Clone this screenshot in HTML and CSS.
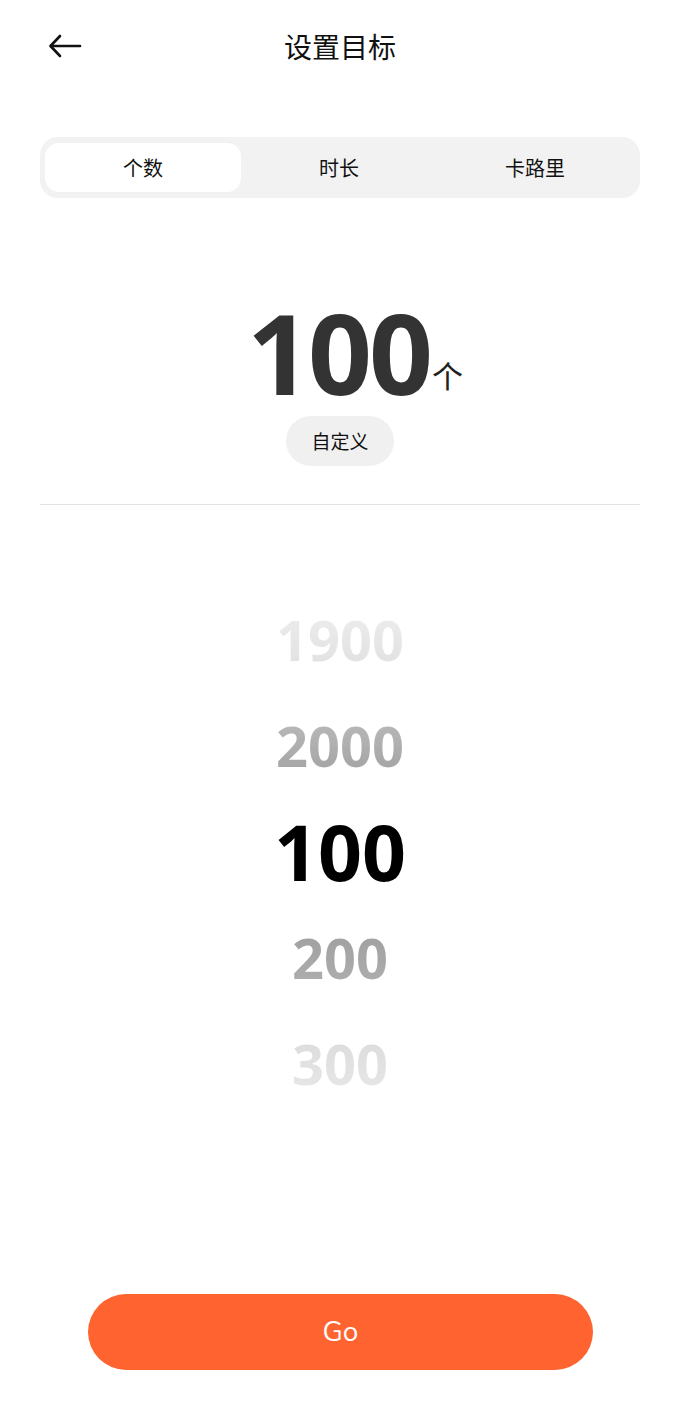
FILE: index.html
```html
<!DOCTYPE html>
<html lang="zh-CN">
<head>
    <meta charset="utf-8"/>
    <meta content="width=device-width, initial-scale=1" name="viewport"/>
    <title>设置目标</title>
    <link rel="stylesheet" href="styles.css">
</head>
<body>
    <div class="page">
        <header class="topbar">
            <a class="back" href="#" aria-label="返回">
                <svg width="34" height="24" viewBox="0 0 34 24" fill="none" stroke="#111" stroke-width="2.6" stroke-linecap="round" stroke-linejoin="round">
                    <path d="M32 12H3"/>
                    <path d="M12 2L2.5 12L12 22"/>
                </svg>
            </a>
            <h1 class="title">设置目标</h1>
            <span></span>
        </header>

        <div class="tabs">
            <div class="tab active">个数</div>
            <div class="tab">时长</div>
            <div class="tab">卡路里</div>
        </div>

        <div class="value">
            <div class="value-row">
                <span class="value-num">100</span>
                <span class="value-unit">个</span>
            </div>
            <button class="custom">自定义</button>
        </div>

        <hr class="divider">

        <div class="picker">
            <div class="pick far top">1900</div>
            <div class="pick near top">2000</div>
            <div class="pick current">100</div>
            <div class="pick near bottom">200</div>
            <div class="pick far bottom">300</div>
        </div>

        <button class="go">Go</button>
    </div>
</body>
</html>
```

FILE: styles.css
```css
body {
    margin: 0;
    padding: 0;
    background-color: #fff;
    color: #111;
    font-family: "Noto Sans", "Noto Sans CJK SC", sans-serif;
}
.page {
    min-height: 100vh;
    display: flex;
    flex-direction: column;
    padding: 0 40px;
    box-sizing: border-box;
}
.topbar {
    height: 92px;
    display: grid;
    grid-template-columns: 1fr auto 1fr;
    align-items: center;
}
.back {
    display: flex;
    align-items: center;
    padding-left: 8px;
}
.title {
    margin: 0;
    font-size: 28px;
    font-weight: 400;
    color: #111;
}

.tabs {
    margin-top: 45px;
    background-color: #f2f2f2;
    border-radius: 18px;
    padding: 6px 7px 6px 5px;
    display: grid;
    grid-template-columns: repeat(3, 1fr);
}
.tab {
    height: 49px;
    display: flex;
    align-items: center;
    justify-content: center;
    font-size: 20px;
    color: #111;
    border-radius: 14px;
}
.tab.active {
    background-color: #fff;
}

.value {
    margin-top: 96px;
    display: flex;
    flex-direction: column;
    align-items: center;
}
.value-row {
    display: flex;
    align-items: flex-end;
    margin-left: 30px;
}
.value-num {
    font-size: 112px;
    font-weight: 700;
    line-height: 116px;
    color: #333;
    letter-spacing: -3px;
}
.value-unit {
    font-size: 31px;
    line-height: 31px;
    color: #222;
    margin: 0 0 18px 2px;
}
.custom {
    margin-top: 6px;
    height: 50px;
    padding: 0 25px;
    border: none;
    border-radius: 25px;
    background-color: #f0f0f0;
    font-family: inherit;
    font-size: 19px;
    color: #111;
}

.divider {
    margin: 38px 0 0;
    border: none;
    border-top: 1px solid #e2e2e2;
}

.picker {
    margin-top: 81px;
    display: flex;
    flex-direction: column;
    align-items: center;
}
.pick {
    height: 106px;
    display: flex;
    align-items: center;
    justify-content: center;
    font-size: 56px;
    font-weight: 700;
    -webkit-background-clip: text;
    background-clip: text;
    color: transparent;
}
.pick.far.top {
    background-image: linear-gradient(#f2f2f2, #dcdcdc);
}
.pick.near.top {
    background-image: linear-gradient(#c4c4c4, #9a9a9a);
}
.pick.current {
    font-size: 77px;
    color: #000;
}
.pick.near.bottom {
    background-image: linear-gradient(#999, #b4b4b4);
}
.pick.far.bottom {
    background-image: linear-gradient(#d6d6d6, #ececec);
}

.go {
    margin: auto 47px 38px 48px;
    height: 76px;
    border: none;
    border-radius: 38px;
    background-color: #ff6330;
    color: #fff;
    font-family: "Nunito", "Noto Sans", sans-serif;
    font-size: 28px;
}
```
